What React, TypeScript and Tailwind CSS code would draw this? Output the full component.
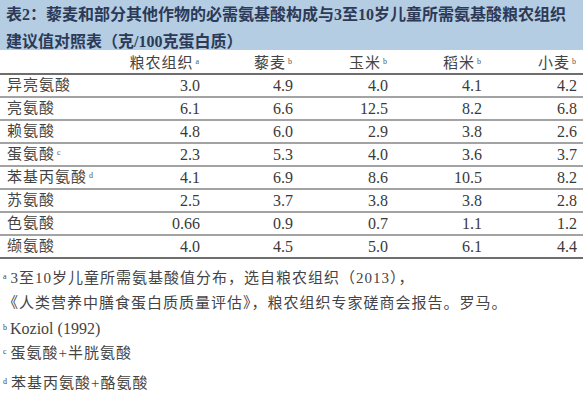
import React from "react";

const font = { fontFamily: "'Liberation Serif', 'Noto Sans CJK SC', serif" };

function Sup({ c }: { c: string }) {
  return <sup className="ml-[2px] text-[8px] text-[#555]">{c}</sup>;
}

const rows: { name: string; sup?: string; v: string[] }[] = [
  { name: "异亮氨酸", v: ["3.0", "4.9", "4.0", "4.1", "4.2"] },
  { name: "亮氨酸", v: ["6.1", "6.6", "12.5", "8.2", "6.8"] },
  { name: "赖氨酸", v: ["4.8", "6.0", "2.9", "3.8", "2.6"] },
  { name: "蛋氨酸", sup: "c", v: ["2.3", "5.3", "4.0", "3.6", "3.7"] },
  { name: "苯基丙氨酸", sup: "d", v: ["4.1", "6.9", "8.6", "10.5", "8.2"] },
  { name: "苏氨酸", v: ["2.5", "3.7", "3.8", "3.8", "2.8"] },
  { name: "色氨酸", v: ["0.66", "0.9", "0.7", "1.1", "1.2"] },
  { name: "缬氨酸", v: ["4.0", "4.5", "5.0", "6.1", "4.4"] },
];

const heads = [
  { t: "粮农组织", s: "a" },
  { t: "藜麦", s: "b" },
  { t: "玉米", s: "b" },
  { t: "稻米", s: "b" },
  { t: "小麦", s: "b" },
];

const grid = "grid grid-cols-[110px_90px_93px_95px_94px_95px] pr-[6px]";

export default function App() {
  return (
    <div className="w-[583px] h-[402px] bg-white overflow-hidden text-[#3a3a3a]" style={font}>
      <div className="h-[50px] bg-[#b4cde2] pt-[1px] pl-[6px] text-[16px] font-semibold leading-[27px] text-[#2c3a58] whitespace-nowrap">
        <div>表2：藜麦和部分其他作物的必需氨基酸构成与3至10岁儿童所需氨基酸粮农组织</div>
        <div>建议值对照表（克/100克蛋白质）</div>
      </div>

      <div className={`${grid} h-[25px] pt-[2px] items-center border-b-2 border-[#6e6e6e] text-[15px] text-[#444] tracking-[1px]`}>
        <div />
        {heads.map((h) => (
          <div key={h.t} className="text-right">
            {h.t}
            <Sup c={h.s} />
          </div>
        ))}
      </div>

      {rows.map((r, i) => (
        <div
          key={r.name}
          className={`${grid} h-[23px] items-center ${
            i === rows.length - 1 ? "border-b-2 border-[#6e6e6e]" : "border-b-2 border-[#a3a3a3]"
          }`}
        >
          <div className="pl-[7px] text-[15px] tracking-[1px] text-[#444] leading-none whitespace-nowrap">
            {r.name}
            {r.sup && <Sup c={r.sup} />}
          </div>
          {r.v.map((v, j) => (
            <div key={j} className="text-right text-[16px] leading-none">
              {v}
            </div>
          ))}
        </div>
      ))}

      <div className="flex flex-col pt-[7px] pl-[3px] text-[15px] leading-[25px] text-[#444] whitespace-nowrap">
        <div className="tracking-[1px]">
          <sup className="text-[8px] mr-[3px]">a</sup>
          3至10岁儿童所需氨基酸值分布，选自粮农组织（2013），
        </div>
        <div className="tracking-[1px]">《人类营养中膳食蛋白质质量评估》，粮农组织专家磋商会报告。罗马。</div>
        <div className="text-[16px]">
          <sup className="text-[8px] mr-[3px]">b</sup>
          Koziol (1992)
        </div>
        <div className="tracking-[1px]">
          <sup className="text-[8px] mr-[3px]">c</sup>
          蛋氨酸+半胱氨酸
        </div>
        <div className="tracking-[1px] mt-[5px]">
          <sup className="text-[8px] mr-[3px]">d</sup>
          苯基丙氨酸+酪氨酸
        </div>
      </div>
    </div>
  );
}
